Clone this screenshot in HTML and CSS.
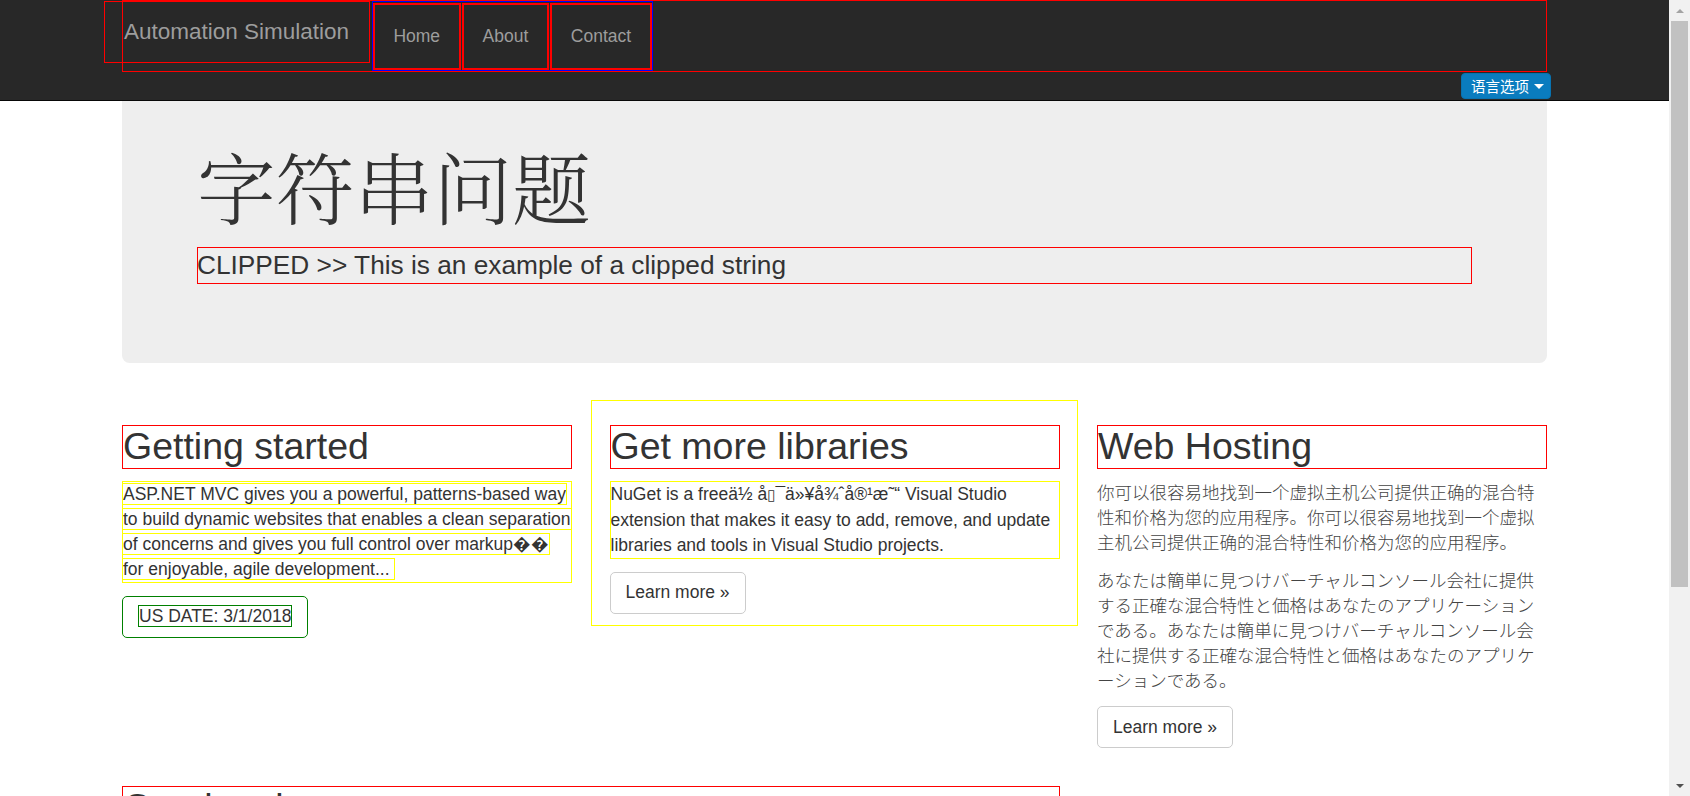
FILE: index.html
```html
<!DOCTYPE html>
<html lang="en">
<head>
<meta charset="utf-8">
<title>字符串问题 - Automation Simulation</title>
<link rel="stylesheet" href="styles.css">
</head>
<body>
<header class="navbar">
  <div class="container">
    <div class="nav-frame">
      <div class="navbar-header">
        <a class="navbar-brand" href="#">Automation Simulation</a>
      </div>
      <ul class="nav">
        <li><a href="#">Home</a></li>
        <li><a href="#">About</a></li>
        <li><a href="#">Contact</a></li>
      </ul>
    </div>
    <div class="lang-row">
      <button class="lang-btn" type="button" lang="zh-CN">语言选项 <span class="caret"></span></button>
    </div>
  </div>
</header>

<main class="container body-content">
  <section class="jumbotron">
    <h1 class="cjk-title" lang="zh-CN">字符串问题</h1>
    <p class="lead mark-red">CLIPPED &gt;&gt; This is an example of a clipped string</p>
  </section>

  <div class="row">
    <div class="col">
      <h2 class="mark-red">Getting started</h2>
      <p class="mark-yellow"><span class="mark-inline">ASP.NET MVC gives you a powerful, patterns-based way to build dynamic websites that enables a clean separation of concerns and gives you full control over markup&#xFFFD;&#xFFFD; for enjoyable, agile development...&nbsp;</span></p>
      <div class="btn btn-green"><span class="mark-green">US DATE: 3/1/2018</span></div>
    </div>
    <div class="col mark-yellow-box">
      <h2 class="mark-red">Get more libraries</h2>
      <p class="mark-yellow">NuGet is a freeä½&nbsp;å<span class="tofu">&#x25AF;</span>¯ä»¥å¾ˆå®¹æ˜“ Visual Studio extension that makes it easy to add, remove, and update libraries and tools in Visual Studio projects.</p>
      <p><a class="btn btn-default" href="#">Learn more &raquo;</a></p>
    </div>
    <div class="col">
      <h2 class="mark-red">Web Hosting</h2>
      <p class="cjk" lang="zh-CN">你可以很容易地找到一个虚拟主机公司提供正确的混合特性和价格为您的应用程序。你可以很容易地找到一个虚拟主机公司提供正确的混合特性和价格为您的应用程序。</p>
      <p class="cjk cjk-ja" lang="ja">あなたは簡単に見つけバーチャルコンソール会社に提供する正確な混合特性と価格はあなたのアプリケーションである。あなたは簡単に見つけバーチャルコンソール会社に提供する正確な混合特性と価格はあなたのアプリケーションである。</p>
      <p><a class="btn btn-default" href="#">Learn more &raquo;</a></p>
    </div>
  </div>

  <div class="row">
    <div class="col col-wide">
      <h2 class="mark-red">Overlapping</h2>
      <p>Text that overlaps other text is hard to read and hard to test. This section places long labels into narrow boxes so that the automated checks can find where content runs over its neighbours, where a string is cut off, and where a line wraps in a way that was not planned by the layout.</p>
    </div>
  </div>

  <hr>
  <footer>
    <p>&copy; 2018 - Automation Simulation</p>
  </footer>
</main>

<div class="scrollbar" aria-hidden="true">
  <span class="sb-arrow sb-up"></span>
  <span class="sb-track"><span class="sb-thumb"></span></span>
  <span class="sb-arrow sb-down"></span>
</div>
</body>
</html>
```

FILE: styles.css
```css
* {
  box-sizing: border-box;
}

html {
  scrollbar-width: none;
}

body {
  margin: 0 21px 0 0;
  padding: 62.5px 0 25px;
  font-family: "Liberation Sans", Arial, "Noto Sans CJK SC", sans-serif;
  font-size: 17.5px;
  line-height: 25px;
  color: #333;
  background: #fff;
}

.container {
  width: 1462.5px;
  margin: 0 auto;
  padding: 0 18.75px;
}

/* ---------- window scrollbar ---------- */
.scrollbar {
  position: fixed;
  top: 0;
  right: 0;
  z-index: 200;
  display: flex;
  flex-direction: column;
  width: 21px;
  height: 100vh;
  background: #f1f1f1;
}

.sb-arrow {
  display: flex;
  align-items: center;
  justify-content: center;
  height: 21px;
  flex: none;
}

.sb-up::before {
  content: "";
  border-bottom: 4px solid #a3a3a3;
  border-left: 4px solid transparent;
  border-right: 4px solid transparent;
}

.sb-down::before {
  content: "";
  border-top: 4px solid #505050;
  border-left: 4px solid transparent;
  border-right: 4px solid transparent;
}

.sb-track {
  flex: 1;
  padding: 0 2px;
}

.sb-thumb {
  display: block;
  height: 566px;
  background: #c1c1c1;
}

/* ---------- navbar ---------- */
.navbar {
  position: fixed;
  top: 0;
  left: 0;
  right: 21px;
  z-index: 100;
  height: 101px;
  background: #282828;
  border-bottom: 1px solid #080808;
}

.nav-frame {
  display: flex;
  align-items: flex-start;
  height: 72px;
  outline: 1px solid #f00;
  outline-offset: -1px;
}

.navbar-header {
  display: flex;
  margin-top: 1px;
  outline: 1px solid #f00;
  outline-offset: -1px;
}

.navbar-brand {
  display: block;
  height: 62px;
  margin-left: -18px;
  padding: 18px 20.5px 18px 20px;
  font-size: 22.5px;
  line-height: 25px;
  color: #9d9d9d;
  text-decoration: none;
  outline: 1px solid #f00;
  outline-offset: -1px;
}

.nav {
  display: flex;
  gap: 1px;
  list-style: none;
  margin: 1px 0 0 2px;
  padding: 1px 0 0;
  border: 1px solid #00f;
}

.nav li {
  border: 2px solid #f00;
}

.nav a {
  display: block;
  padding: 18.75px;
  line-height: 25px;
  color: #9d9d9d;
  text-decoration: none;
}

.lang-row {
  display: flex;
  justify-content: flex-end;
  margin: 1px -4px 0 0;
}

.lang-btn {
  display: flex;
  align-items: center;
  height: 26px;
  padding: 0 6px 0 9px;
  font-family: "Noto Sans CJK SC", sans-serif;
  font-size: 14.5px;
  line-height: 24px;
  color: #fff;
  background: #0a7cbf;
  border: 1px solid #0873b1;
  border-radius: 4px;
}

.caret {
  display: inline-block;
  width: 0;
  height: 0;
  margin-left: 5px;
  border-top: 5px solid #fff;
  border-left: 5px solid transparent;
  border-right: 5px solid transparent;
}

/* ---------- jumbotron ---------- */
.jumbotron {
  padding: 60px 75px;
  margin-bottom: 37.5px;
  background: #eee;
  border-radius: 7.5px;
}

h1, h2 {
  font-weight: 500;
  line-height: 1.1;
  color: #333;
}

.cjk-title {
  margin: 19px 0 18.5px;
  font-family: "Noto Serif CJK SC", "Noto Sans CJK SC", serif;
  font-size: 78.75px;
  font-weight: 300;
}

.lead {
  margin: 0 0 18.75px;
  font-size: 26.25px;
  line-height: 37.5px;
  font-weight: 200;
}

/* ---------- debug marks ---------- */
.mark-red {
  outline: 1px solid #f00;
  outline-offset: -1px;
}

h2.mark-red {
  border: 1px solid #f00;
  outline: none;
}

.mark-yellow {
  border: 1px solid #ff0;
}

.mark-yellow-box {
  outline: 1px solid #ff0;
  outline-offset: -1px;
}

.mark-inline {
  outline: 1px solid #ff0;
}

.mark-green {
  outline: 1px solid #008000;
}

/* ---------- grid ---------- */
.row {
  display: grid;
  grid-template-columns: repeat(3, 1fr);
  align-items: start;
  margin: 0 -18.75px;
}

.col {
  padding: 0 18.75px;
}

.col-wide {
  grid-column: span 2;
}

h2 {
  margin: 25px 0 12.5px;
  font-size: 37.5px;
}

p {
  margin: 0 0 12.5px;
}

.tofu {
  font-family: "DejaVu Sans", sans-serif;
  font-size: 15px;
}

.cjk {
  font-family: "Liberation Sans", "Noto Sans CJK SC", sans-serif;
  font-weight: 300;
  color: #444;
  line-break: loose;
}

.cjk-ja {
  font-family: "Liberation Sans", "Noto Sans CJK JP", sans-serif;
}

/* ---------- buttons ---------- */
.btn {
  display: inline-block;
  padding: 7.5px 15px;
  font-size: 17.5px;
  line-height: 25px;
  color: #333;
  text-decoration: none;
  background: #fff;
  border: 1px solid #ccc;
  border-radius: 5px;
}

.btn-green {
  padding: 7.5px 16px;
  border-color: #008000;
}

/* ---------- footer ---------- */
hr {
  margin: 25px 0;
  border: 0;
  border-top: 1px solid #eee;
}

footer p {
  margin: 0 0 12.5px;
}
```
